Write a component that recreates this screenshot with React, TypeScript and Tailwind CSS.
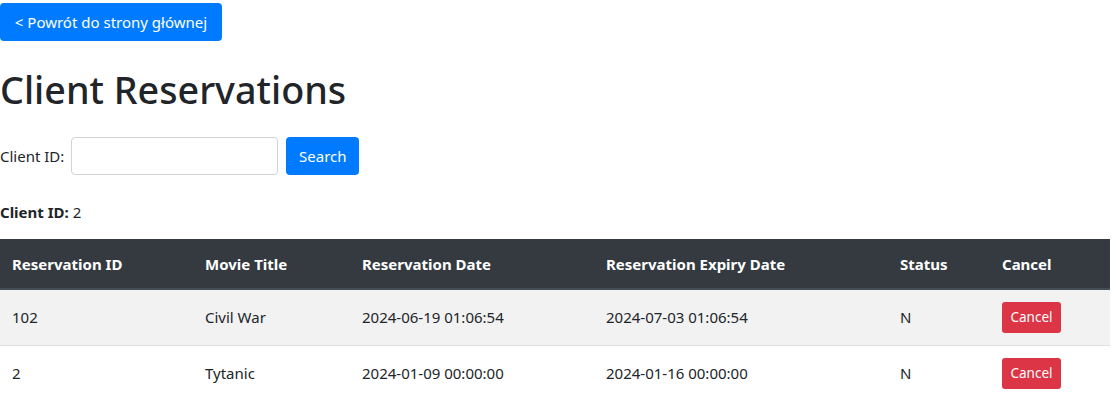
const rows = [
  { id: '102', title: 'Civil War', date: '2024-06-19 01:06:54', expiry: '2024-07-03 01:06:54', status: 'N' },
  { id: '2', title: 'Tytanic', date: '2024-01-09 00:00:00', expiry: '2024-01-16 00:00:00', status: 'N' },
]

export default function App() {
  return (
    <div className="min-h-[408px] bg-white text-[#212529] font-['Noto_Sans',sans-serif] text-[15px] leading-6">
      <div className="pt-[3px]">
        <button className="h-[38px] w-[222px] rounded-[4px] bg-[#007bff] text-white text-[15px]">
          &lt; Powrót do strony głównej
        </button>
      </div>

      <h1 className="mt-[25px] mb-2 text-[37.7px] leading-[48px] font-medium">Client Reservations</h1>

      <form className="mt-[23px] flex items-center" onSubmit={(e) => e.preventDefault()}>
        <label className="mr-[7px]">Client ID:</label>
        <input className="w-[207px] h-[38px] rounded-[4px] border border-[#ced4da] bg-white px-3" />
        <button className="ml-2 h-[38px] w-[73px] rounded-[4px] bg-[#007bff] text-white">Search</button>
      </form>

      <p className="mt-[25px]">
        <strong>Client ID:</strong> 2
      </p>

      <table className="mt-[15px] w-[1110px] border-collapse text-left">
        <thead>
          <tr className="bg-[#343a40] text-white">
            <th className="w-[193px] h-[50px] px-3 font-bold border-b-2 border-[#454d55]">Reservation ID</th>
            <th className="w-[157px] px-3 font-bold border-b-2 border-[#454d55]">Movie Title</th>
            <th className="w-[244px] px-3 font-bold border-b-2 border-[#454d55]">Reservation Date</th>
            <th className="w-[294px] px-3 font-bold border-b-2 border-[#454d55]">Reservation Expiry Date</th>
            <th className="w-[102px] px-3 font-bold border-b-2 border-[#454d55]">Status</th>
            <th className="px-3 font-bold border-b-2 border-[#454d55]">Cancel</th>
          </tr>
        </thead>
        <tbody>
          {rows.map((r, i) => (
            <tr key={r.id} className={i % 2 === 0 ? 'bg-[#f2f2f2]' : 'bg-white'}>
              <td className={`h-[56px] px-3 ${i > 0 ? 'border-t border-[#dee2e6]' : ''}`}>{r.id}</td>
              <td className={`px-3 ${i > 0 ? 'border-t border-[#dee2e6]' : ''}`}>{r.title}</td>
              <td className={`px-3 ${i > 0 ? 'border-t border-[#dee2e6]' : ''}`}>{r.date}</td>
              <td className={`px-3 ${i > 0 ? 'border-t border-[#dee2e6]' : ''}`}>{r.expiry}</td>
              <td className={`px-3 ${i > 0 ? 'border-t border-[#dee2e6]' : ''}`}>{r.status}</td>
              <td className={`px-3 ${i > 0 ? 'border-t border-[#dee2e6]' : ''}`}>
                <button className="h-[31px] w-[59px] rounded-[3px] bg-[#dc3545] text-white text-[13.5px]">Cancel</button>
              </td>
            </tr>
          ))}
        </tbody>
      </table>
    </div>
  )
}
